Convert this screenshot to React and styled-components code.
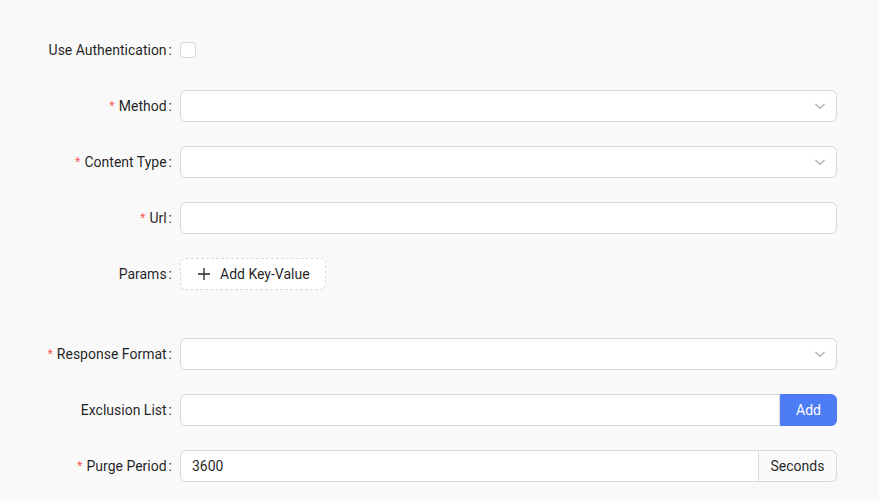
import React, { useState } from "react"
import styled, { createGlobalStyle } from "styled-components"

// --- global ---
const GlobalStyle = createGlobalStyle`
  html, body {
    margin: 0;
    padding: 0;
    background: #f9f9f9;
    font-family: Roboto, "Liberation Sans", Arial, sans-serif;
    font-size: 14px;
    color: rgba(0, 0, 0, 0.88);
  }
  * { box-sizing: border-box; }
`

const Chevron = () => (
  <svg width="12" height="12" viewBox="0 0 12 12" fill="none">
    <path d="M1.5 4L6 8.5L10.5 4" stroke="rgba(0,0,0,0.35)" strokeWidth="1.1" />
  </svg>
)

const Plus = () => (
  <svg width="14" height="14" viewBox="0 0 14 14" fill="none">
    <path d="M7 1v12M1 7h12" stroke="rgba(0,0,0,0.85)" strokeWidth="1.3" />
  </svg>
)

export default function App() {
  // --- state ---
  const [useAuth, setUseAuth] = useState(false)
  const [purge, setPurge] = useState("3600")

  return (
    <>
      <GlobalStyle />
      <Form>
        <Item>
          <Label>Use Authentication</Label>
          <Control>
            <Checkbox checked={useAuth} onClick={() => setUseAuth(!useAuth)} />
          </Control>
        </Item>

        <Item>
          <Label required>Method</Label>
          <Control>
            <Select>
              <Chevron />
            </Select>
          </Control>
        </Item>

        <Item>
          <Label required>Content Type</Label>
          <Control>
            <Select>
              <Chevron />
            </Select>
          </Control>
        </Item>

        <Item>
          <Label required>Url</Label>
          <Control>
            <Input />
          </Control>
        </Item>

        <Item $extra>
          <Label>Params</Label>
          <Control>
            <DashedButton>
              <Plus />
              Add Key-Value
            </DashedButton>
          </Control>
        </Item>

        <Item>
          <Label required>Response Format</Label>
          <Control>
            <Select>
              <Chevron />
            </Select>
          </Control>
        </Item>

        <Item>
          <Label>Exclusion List</Label>
          <Control>
            <Group>
              <Input $joined />
              <PrimaryButton>Add</PrimaryButton>
            </Group>
          </Control>
        </Item>

        <Item>
          <Label required>Purge Period</Label>
          <Control>
            <Group>
              <Input $joined value={purge} onChange={e => setPurge(e.target.value)} />
              <Addon>Seconds</Addon>
            </Group>
          </Control>
        </Item>
      </Form>
    </>
  )
}

// --- styled components ---

const Form = styled.div`
  padding: 34px 42px 0 0;
  width: 879px;
`

const Item = styled.div`
  display: flex;
  align-items: center;
  height: 32px;
  margin-bottom: ${p => (p.$extra ? "48px" : "24px")};
`

const Label = styled.div`
  width: 180px;
  flex: none;
  text-align: right;
  line-height: 32px;
  white-space: nowrap;
  &::before {
    content: ${p => (p.required ? '"*"' : "none")};
    color: #ff4d4f;
    font-family: SimSun, "Liberation Sans", sans-serif;
    margin-right: 4px;
  }
  &::after {
    content: ":";
    margin: 0 8px 0 2px;
  }
`

const Control = styled.div`
  flex: 1;
  display: flex;
  align-items: center;
`

const Checkbox = styled.span`
  width: 16px;
  height: 16px;
  border: 1px solid #d9d9d9;
  border-radius: 4px;
  background: ${p => (p.checked ? "#4e7cf6" : "#fff")};
  cursor: pointer;
`

const Select = styled.div`
  width: 100%;
  height: 32px;
  background: #fff;
  border: 1px solid #d9d9d9;
  border-radius: 6px;
  display: flex;
  align-items: center;
  justify-content: flex-end;
  padding-right: 10px;
`

const Input = styled.input`
  width: 100%;
  height: 32px;
  background: #fff;
  border: 1px solid #d9d9d9;
  border-radius: ${p => (p.$joined ? "6px 0 0 6px" : "6px")};
  padding: 4px 11px;
  font: inherit;
  color: rgba(0, 0, 0, 0.88);
  outline: none;
  &:focus {
    border-color: #4e7cf6;
  }
`

const Group = styled.div`
  display: flex;
  width: 100%;
`

const PrimaryButton = styled.button`
  flex: none;
  width: 57px;
  height: 32px;
  border: none;
  border-radius: 0 6px 6px 0;
  background: #4e7cf6;
  color: #fff;
  font: inherit;
  cursor: pointer;
`

const Addon = styled.div`
  flex: none;
  width: 78px;
  height: 32px;
  border: 1px solid #d9d9d9;
  border-left: none;
  border-radius: 0 6px 6px 0;
  background: #fafafa;
  display: flex;
  align-items: center;
  justify-content: center;
`

const DashedButton = styled.button`
  height: 32px;
  padding: 0 15px 0 16px;
  display: flex;
  align-items: center;
  gap: 9px;
  background: #fff;
  border: 1px dashed #d9d9d9;
  border-radius: 6px;
  font: inherit;
  color: rgba(0, 0, 0, 0.88);
  cursor: pointer;
`
